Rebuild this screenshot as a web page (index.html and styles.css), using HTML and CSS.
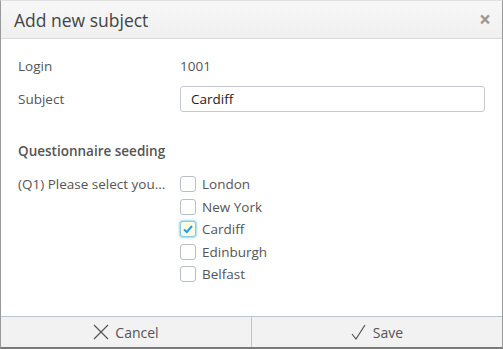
FILE: index.html
```html
<!DOCTYPE html>
<html>
<head>
<meta charset="utf-8">
<link rel="stylesheet" href="styles.css">
</head>
<body>
<div class="dialog">
  <div class="header">
    <span class="title">Add new subject</span>
    <span class="close">&times;</span>
  </div>
  <div class="content">
    <div class="row">
      <div class="label">Login</div>
      <div class="value">1001</div>
    </div>
    <div class="row">
      <div class="label">Subject</div>
      <div class="value"><div class="input">Cardiff</div></div>
    </div>
    <div class="section">Questionnaire seeding</div>
    <div class="qrow">
      <div class="label">(Q1) Please select you...</div>
      <div class="options">
        <div class="opt"><span class="cb"></span>London</div>
        <div class="opt"><span class="cb"></span>New York</div>
        <div class="opt"><span class="cb checked"><svg width="12" height="12" viewBox="0 0 12 12"><path d="M2 6.5 L4.8 9 L10 3" fill="none" stroke="#1ba1e2" stroke-width="2"/></svg></span>Cardiff</div>
        <div class="opt"><span class="cb"></span>Edinburgh</div>
        <div class="opt"><span class="cb"></span>Belfast</div>
      </div>
    </div>
  </div>
  <div class="footer">
    <div class="btn"><svg width="16" height="16" viewBox="0 0 16 16"><path d="M1 1 L15 15 M15 1 L1 15" stroke="#555" stroke-width="1.2" fill="none"/></svg>Cancel</div>
    <div class="btn"><svg width="16" height="16" viewBox="0 0 16 16"><path d="M1 10 L5 15 L14 1" stroke="#555" stroke-width="1.2" fill="none"/></svg>Save</div>
  </div>
</div>
</body>
</html>
```
FILE: styles.css
```css
html, body { margin: 0; padding: 0; background: #fff; }
body { font-family: "Open Sans", "Lato", sans-serif; color: #555; font-size: 13.5px; }
.dialog {
  width: 503px; height: 349px; box-sizing: border-box;
  border: 1px solid #999; border-top-color: #e0e0e0; border-bottom: 2px solid #7a7a7a;
  display: flex; flex-direction: column; background: #fff;
}
.header {
  height: 37px; border-bottom: 1px solid #dadada;
  background: linear-gradient(#f7f7f7, #f0f0f0);
  display: flex; align-items: center; justify-content: space-between;
  padding: 0 11px 0 13px;
}
.title { font-size: 17.5px; color: #444; }
.close { font-size: 21px; color: #999; line-height: 1; font-weight: bold; }
.content { flex: 1; padding: 14px 17px 0 17px; }
.row { display: flex; align-items: center; height: 26px; margin-bottom: 7px; }
.label { width: 162px; }
.value { flex: 1; }
.input {
  height: 24px; border: 1px solid #c4c9d2; border-radius: 3px; padding: 0 10px;
  line-height: 24px; color: #222;
}
.section { font-weight: 600; margin-top: 29px; height: 20px; line-height: 20px; }
.qrow { display: flex; margin-top: 13px; }
.qrow .label { line-height: 20px; }
.options { display: flex; flex-direction: column; gap: 2.5px; }
.opt { display: flex; align-items: center; height: 20px; }
.cb {
  width: 14px; height: 14px; border: 1px solid #b9bec6; border-radius: 3px; margin-right: 6px;
  display: flex; align-items: center; justify-content: center; background: #fff;
}
.cb.checked { background: #fffbe0; box-shadow: 0 0 2px 1px #9ad8f0; border-color: #8cc8e8; }
.footer {
  height: 30px; border-top: 1px solid #bcc5d6; background: #f2f2f2;
  display: flex;
}
.btn {
  flex: 1; display: flex; align-items: center; justify-content: center; gap: 6px;
  color: #555; font-size: 14px;
}
.btn + .btn { border-left: 1px solid #bcc5d6; }
```
